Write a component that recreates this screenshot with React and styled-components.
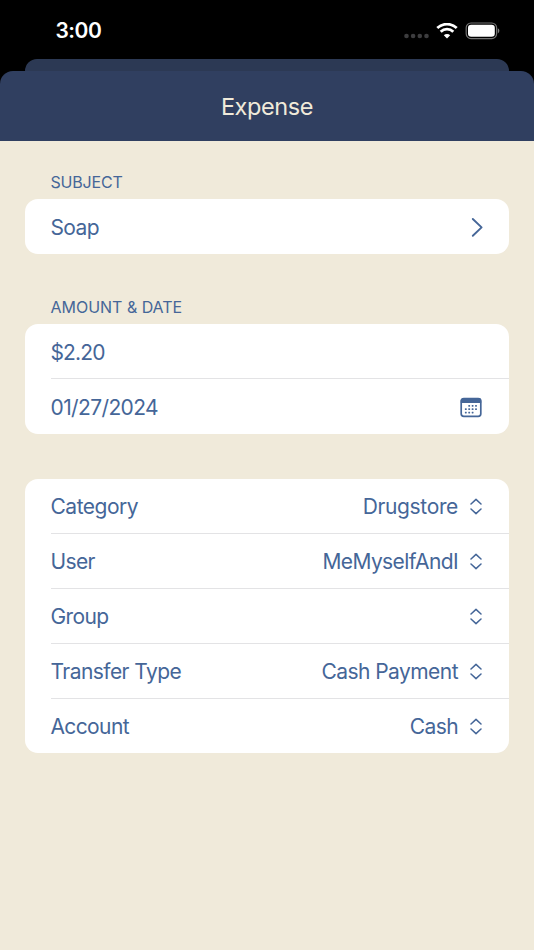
import styled, { createGlobalStyle } from 'styled-components';

const GlobalStyle = createGlobalStyle`
  *{ box-sizing: border-box; }
  body{
    margin: 0;
    background: #f0eada;
    font-family: Inter, "Liberation Sans", sans-serif;
    font-weight: 380;
    color: #456698;
  }
`
const Screen = styled.div`
  width: 534px; height: 950px;
  display: flex; flex-direction: column;
  overflow: hidden;
`
/* Status bar and the sheet behind */
const Top = styled.div`
  height: 71px; flex: none;
  background: #000;
  display: flex; flex-direction: column;
`
const StatusBar = styled.div`
  height: 59px;
  padding: 3px 34px 0 55.5px;
  display: flex; justify-content: space-between; align-items: center;
`
const Time = styled.span`
  color: white;
  font-size: 21px; font-weight: 600; line-height: 26px;
  letter-spacing: -0.5px;
`
const StatusIcons = styled.div`
  display: flex; align-items: center;
`
const BackSheet = styled.div`
  height: 12px;
  margin: 0 25px;
  background: #2c3954;
  border-radius: 12px 12px 0 0;
`
const HeaderWrap = styled.div`
  background: #000;
  flex: none;
`
const Header = styled.header`
  height: 70px;
  padding-top: 2px;
  background: #303f60;
  border-radius: 13px 13px 0 0;
  display: flex; justify-content: center; align-items: center;
`
const Title = styled.h1`
  margin: 0;
  color: #f0eada;
  font-size: 23.5px; font-weight: 380; line-height: 30px;
  letter-spacing: -0.4px;
`
const Content = styled.main`
  flex: 1;
  padding: 30.4px 25px 0;
`
const Section = styled.section`
  margin-bottom: ${props => props.$gap}px;
`
const SectionTitle = styled.h2`
  margin: 0; padding: 0 0 6px 25.5px;
  font-size: 16px; font-weight: 380; line-height: 22px;
  letter-spacing: ${props => props.$track || 0}px;
`
const Card = styled.div`
  background: white;
  border-radius: 13px;
`
const Row = styled.div`
  height: 54.9px;
  margin-left: 25.5px; padding: 3px 27px 0 0;
  display: flex; align-items: center;
  &:not(:last-child){ border-bottom: 1px solid #e3e3e5; }
`
const Text = styled.span`
  font-size: 21px; line-height: 28px;
  white-space: nowrap;
  letter-spacing: ${props => props.$track || -0.62}px;
`
const Trailing = styled.div`
  margin-left: auto;
  display: flex; align-items: center; gap: 12px;
`

const CellDots = () => (
  <svg width="26" height="6" viewBox="0 0 26 6" fill="#3d3d3f" style={{ marginTop: 10 }}>
    {[2.5, 9.1, 15.8, 22.5].map(x => <circle key={x} cx={x} cy="3" r="2.3" />)}
  </svg>
)

const Wifi = () => (
  <svg width="22" height="16" viewBox="0 0 22 16" fill="none" stroke="white" style={{ marginLeft: 6 }}>
    <path d="M1.3 5.1A13.9 13.9 0 0 1 20.7 5.1" strokeWidth="2.8" />
    <path d="M4.7 8.7A9 9 0 0 1 17.3 8.7" strokeWidth="2.8" />
    <path d="M11 15.6L7.8 12.3A4.6 4.6 0 0 1 14.2 12.3Z" fill="white" stroke="none" />
  </svg>
)

const Battery = () => (
  <svg width="34" height="17" viewBox="0 0 34 17" overflow="visible" style={{ marginLeft: 8 }}>
    <rect x="0.2" y="0" width="30.4" height="15.6" rx="4.8" fill="none" stroke="#737373" strokeWidth="1.2" />
    <rect x="2" y="1.8" width="26.8" height="12" rx="3.2" fill="white" />
    <path d="M31.8 5.2Q33.4 6 33.4 7.8T31.8 10.4Z" fill="#808080" />
  </svg>
)

const Chevron = () => (
  <svg width="12" height="20" viewBox="0 0 12 20" fill="none" stroke="currentColor" strokeWidth="1.9" strokeLinecap="round" strokeLinejoin="round" overflow="visible">
    <path d="M2.8 1L11.6 9.4L2.8 17.8" />
  </svg>
)

const UpDown = () => (
  <svg width="12" height="18" viewBox="0 0 12 18" fill="none" stroke="currentColor" strokeWidth="1.5" strokeLinecap="round" strokeLinejoin="round">
    <path d="M1 6L6 1.4L11 6M1 11L6 15.6L11 11" />
  </svg>
)

const dots = [
  [9.2, 8.6], [12.6, 8.6], [16, 8.6],
  [5.8, 12], [9.2, 12], [12.6, 12], [16, 12],
  [5.8, 15.4], [9.2, 15.4], [12.6, 15.4],
]

const CalendarIcon = () => (
  <svg width="22" height="20" viewBox="0 0 22 20" fill="currentColor" overflow="visible">
    <rect x="1.2" y="0.5" width="19.6" height="17.8" rx="2.6" fill="none" stroke="currentColor" strokeWidth="1.7" />
    <path d="M0.8 5V2.6Q0.8 0 3.4 0H18.6Q21.2 0 21.2 2.6V5Z" />
    {dots.map(([x, y]) => <rect key={`${x}-${y}`} x={x - 0.9} y={y - 1.7} width="1.8" height="1.8" rx="0.4" />)}
  </svg>
)

const details = [
  { label: 'Category', value: 'Drugstore', labelTrack: -0.5, track: -0.35 },
  { label: 'User', value: 'MeMyselfAndI' },
  { label: 'Group', value: '' },
  { label: 'Transfer Type', value: 'Cash Payment', labelTrack: -0.55, track: -0.55 },
  { label: 'Account', value: 'Cash' },
]

const App = () => {
  return <>
    <GlobalStyle />
    <Screen>
      <Top>
        <StatusBar>
          <Time>3:00</Time>
          <StatusIcons>
            <CellDots />
            <Wifi />
            <Battery />
          </StatusIcons>
        </StatusBar>
        <BackSheet />
      </Top>
      <HeaderWrap>
        <Header>
          <Title>Expense</Title>
        </Header>
      </HeaderWrap>
      <Content>
        <Section $gap={42}>
          <SectionTitle $track={-0.2}>SUBJECT</SectionTitle>
          <Card>
            <Row>
              <Text>Soap</Text>
              <Trailing><Chevron /></Trailing>
            </Row>
          </Card>
        </Section>
        <Section $gap={44.9}>
          <SectionTitle $track={-0.02}>AMOUNT &amp; DATE</SectionTitle>
          <Card>
            <Row><Text $track={-0.85}>$2.20</Text></Row>
            <Row>
              <Text>01/27/2024</Text>
              <Trailing><CalendarIcon /></Trailing>
            </Row>
          </Card>
        </Section>
        <Card>
          {details.map(item => (
            <Row key={item.label}>
              <Text $track={item.labelTrack}>{item.label}</Text>
              <Trailing>
                <Text $track={item.track}>{item.value}</Text>
                <UpDown />
              </Trailing>
            </Row>
          ))}
        </Card>
      </Content>
    </Screen>
  </>
}

export default App;
